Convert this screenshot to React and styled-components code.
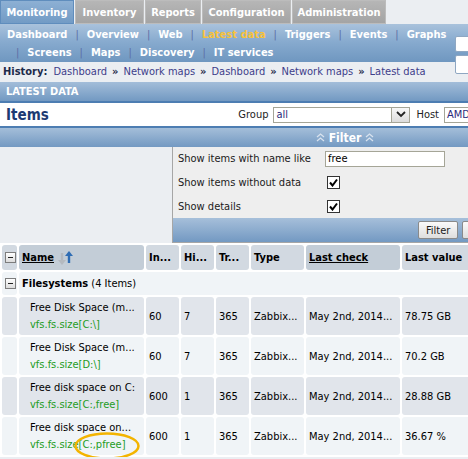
import React from "react";
import styled, { createGlobalStyle } from "styled-components";

const GlobalStyle = createGlobalStyle`
  html, body {
    margin: 0;
    padding: 0;
    overflow: hidden;
    background: #ebeef2;
  }
  body {
    font-family: "DejaVu Sans Condensed", "DejaVu Sans", sans-serif;
    font-size: 11px;
    color: #000;
  }
`;

const Page = styled.div`
  width: 690px;
  position: relative;
`;

/* top tabs */
const TabBar = styled.div`
  display: flex;
  gap: 1px;
  height: 24px;
`;

const Tab = styled.div`
  width: ${(p) => p.w}px;
  height: 22px;
  display: flex;
  align-items: center;
  justify-content: center;
  font-weight: bold;
  color: #fff;
  border: 1px solid ${(p) => (p.active ? "#5f8dbd" : "#bcbcbc")};
  background: ${(p) =>
    p.active
      ? "linear-gradient(#8db0d4, #729bc5)"
      : "linear-gradient(#b6b6b6, #a4a4a4)"};
`;

/* sub menu */
const SubMenu = styled.div`
  display: flex;
  height: 38px;
  background: linear-gradient(#a9c2dc, #88abcf 45%, #6f97c0);
`;

const MenuLinks = styled.div`
  flex: 1;
  padding: 1px 0 0 7px;
`;

const MenuRow = styled.div`
  display: flex;
  align-items: center;
  height: 18px;
  padding-left: ${(p) => p.indent || 0}px;
`;

const MenuLink = styled.span`
  font-weight: bold;
  color: ${(p) => (p.active ? "#f8c23a" : "#fff")};
`;

const MenuSep = styled.span`
  color: #5d6ea6;
  margin: 0 8px;
`;

const SearchCol = styled.div`
  width: 235px;
  height: 38px;
  display: flex;
  flex-direction: column;
  gap: 3px;
  padding-top: 12px;
  box-sizing: border-box;
`;

const SearchBox = styled.div`
  flex: none;
  height: ${(p) => p.h}px;
  background: #fff;
  border: 1px solid #8fa7c2;
  border-radius: 2px;
`;

/* history */
const History = styled.div`
  height: 19px;
  display: flex;
  align-items: center;
  padding-left: 3px;
  color: #3d3d8a;
`;

const HistoryLabel = styled.span`
  font-weight: bold;
  color: #1d2a4a;
  margin-right: 6px;
`;

const Raquo = styled.span`
  color: #1d2a4a;
  margin: 0 5px;
  font-weight: bold;
`;

/* section header */
const SectionHead = styled.div`
  margin-top: 1px;
  height: 19px;
  display: flex;
  align-items: center;
  padding-left: 6px;
  font-weight: bold;
  color: #fff;
  background: linear-gradient(#a3bdd9, #7299c2);
`;

const ItemsBar = styled.div`
  height: 23px;
  display: flex;
  align-items: center;
  background: #fff;
  border-top: 2px solid #4d7db2;
  border-bottom: 2px solid #4d7db2;
  padding-left: 6px;
`;

const ItemsTitle = styled.div`
  font-size: 15px;
  font-weight: bold;
  color: #1c3a72;
  flex: 1;
`;

const CtrlLabel = styled.span`
  color: #222;
  margin-right: 5px;
`;

const Select = styled.div`
  width: ${(p) => p.w}px;
  height: 14px;
  border: 1px solid #a5a597;
  display: flex;
  align-items: center;
  margin-right: 6px;
  background: #fff;
  color: #2a2a7a;
  padding-left: 2px;
`;

const SelectText = styled.span`
  flex: 1;
`;

const DropBtn = styled.span`
  width: 17px;
  height: 14px;
  border-left: 1px solid #a5a597;
  background: linear-gradient(#f8f8f8, #dcdcdc);
  display: flex;
  align-items: center;
  justify-content: center;
`;

/* filter toggle */
const FilterToggle = styled.div`
  height: 19px;
  display: flex;
  align-items: center;
  justify-content: center;
  gap: 4px;
  color: #fff;
  font-weight: bold;
  font-size: 12px;
  background: linear-gradient(#a4bed9, #7399c2);
`;

const FilterArea = styled.div`
  display: flex;
  height: 96px;
`;

const FilterSpacer = styled.div`
  width: 172px;
`;

const FilterBox = styled.div`
  width: 345px;
  border: 1px solid #a6a6a6;
  border-top: none;
  background: #eeeeee;
  display: flex;
  flex-direction: column;
`;

const FilterRow = styled.div`
  height: 24px;
  display: flex;
  align-items: center;
  padding-left: 5px;
`;

const FilterLabel = styled.span`
  width: 147px;
  flex: none;
  color: #1a1a1a;
  white-space: nowrap;
`;

const TextInput = styled.div`
  width: 116px;
  height: 14px;
  border: 1px solid #a5a597;
  background: #fff;
  padding-left: 2px;
  line-height: 14px;
`;

const Check = styled.span`
  width: 11px;
  height: 11px;
  border: 1px solid #333;
  background: #fff;
  margin-left: 2px;
  display: flex;
  align-items: center;
  justify-content: center;
`;

const FilterFoot = styled.div`
  margin-top: auto;
  height: 24px;
  display: flex;
  align-items: center;
  justify-content: flex-end;
  gap: 4px;
  padding-right: 12px;
  background: linear-gradient(#a6bfda, #7399c2);
`;

const Button = styled.div`
  height: 16px;
  padding: 0 7px;
  display: flex;
  align-items: center;
  border: 1px solid #8a8a8a;
  border-radius: 2px;
  background: linear-gradient(#fafafa, #dedede);
  color: #1a1a1a;
`;

/* table */
const Table = styled.table`
  border-collapse: separate;
  border-spacing: 2px;
  background: #fff;
  table-layout: fixed;
  width: 690px;
`;

const Th = styled.th`
  width: ${(p) => p.w}px;
  height: 25px;
  padding: 0 3px;
  text-align: left;
  font-weight: bold;
  white-space: nowrap;
  overflow: hidden;
  border-radius: 3px;
  background: ${(p) => (p.sorted ? "#c3cdd7" : "#d2d9e1")};
  text-decoration: ${(p) => (p.link ? "underline" : "none")};
`;

const Td = styled.td`
  height: ${(p) => p.h || 38}px;
  padding: 0 3px;
  padding-left: ${(p) => p.pl || 3}px;
  white-space: nowrap;
  overflow: hidden;
  border-radius: 3px;
  background: ${(p) => (p.dark ? "#e1e5eb" : "#f0f4f7")};
  line-height: 17px;
`;

const Key = styled.div`
  color: #239c23;
`;

const GroupName = styled.span`
  font-weight: bold;
`;

const MinusBox = styled.span`
  display: flex;
  width: 9px;
  height: 9px;
  border: 1px solid #7d7d7d;
  background: linear-gradient(#fff, #dcdcdc);
  align-items: center;
  justify-content: center;
  &::after {
    content: "";
    width: 5px;
    height: 1px;
    background: #222;
  }
`;

const Highlight = styled.svg`
  position: absolute;
  left: 73px;
  top: 431px;
`;

const Chevrons = () => (
  <svg width="9" height="9" viewBox="0 0 9 9">
    <path d="M1 4 L4.5 1 L8 4 M1 8 L4.5 5 L8 8" stroke="#d8e2ee" strokeWidth="1.3" fill="none" />
  </svg>
);

const SortArrows = () => (
  <svg width="18" height="16" viewBox="0 0 18 16" style={{ verticalAlign: "middle", marginLeft: 3 }}>
    <path d="M5 3 V11" stroke="#b4b9bf" strokeWidth="2.4" />
    <path d="M1 10 L5 15 L9 10 Z" fill="#b4b9bf" />
    <path d="M12 13 V5" stroke="#2f6db4" strokeWidth="2.4" />
    <path d="M8 6 L12 1 L16 6 Z" fill="#2f6db4" />
  </svg>
);

const CheckMark = () => (
  <svg width="9" height="9" viewBox="0 0 9 9">
    <path d="M1 4.5 L3.5 7.5 L8 1.5" stroke="#000" strokeWidth="2" fill="none" />
  </svg>
);

const rows = [
  { name: "Free Disk Space (m...", key: "vfs.fs.size[C:\\]", int: "60", hist: "7", value: "78.75 GB" },
  { name: "Free Disk Space (m...", key: "vfs.fs.size[D:\\]", int: "60", hist: "7", value: "70.2 GB" },
  { name: "Free disk space on C:", key: "vfs.fs.size[C:,free]", int: "600", hist: "1", value: "28.88 GB" },
  { name: "Free disk space on...", key: "vfs.fs.size[C:,pfree]", int: "600", hist: "1", value: "36.67 %" },
];

const menu1 = ["Dashboard", "Overview", "Web", "Latest data", "Triggers", "Events", "Graphs"];
const menu2 = ["Screens", "Maps", "Discovery", "IT services"];
const history = ["Dashboard", "Network maps", "Dashboard", "Network maps", "Latest data"];

export default function App() {
  return (
    <Page>
      <GlobalStyle />
      <TabBar>
        <Tab w={72} active>Monitoring</Tab>
        <Tab w={67}>Inventory</Tab>
        <Tab w={54}>Reports</Tab>
        <Tab w={87}>Configuration</Tab>
        <Tab w={92}>Administration</Tab>
      </TabBar>

      <SubMenu>
        <MenuLinks>
          <MenuRow>
            {menu1.map((m, i) => (
              <React.Fragment key={m}>
                {i > 0 && <MenuSep>|</MenuSep>}
                <MenuLink active={m === "Latest data"}>{m}</MenuLink>
              </React.Fragment>
            ))}
          </MenuRow>
          <MenuRow indent={1}>
            {menu2.map((m) => (
              <React.Fragment key={m}>
                <MenuSep>|</MenuSep>
                <MenuLink>{m}</MenuLink>
              </React.Fragment>
            ))}
          </MenuRow>
        </MenuLinks>
        <SearchCol>
          <SearchBox h={14} />
          <SearchBox h={17} />
        </SearchCol>
      </SubMenu>

      <History>
        <HistoryLabel>History:</HistoryLabel>
        {history.map((h, i) => (
          <React.Fragment key={i}>
            {i > 0 && <Raquo>»</Raquo>}
            <span>{h}</span>
          </React.Fragment>
        ))}
      </History>

      <SectionHead>LATEST DATA</SectionHead>
      <ItemsBar>
        <ItemsTitle>Items</ItemsTitle>
        <CtrlLabel>Group</CtrlLabel>
        <Select w={133}>
          <SelectText>all</SelectText>
          <DropBtn>
            <svg width="10" height="7" viewBox="0 0 10 7">
              <path d="M1 1 L5 5 L9 1" stroke="#222" strokeWidth="1.8" fill="none" />
            </svg>
          </DropBtn>
        </Select>
        <CtrlLabel>Host</CtrlLabel>
        <Select w={236}>
          <SelectText>AMD</SelectText>
        </Select>
      </ItemsBar>

      <FilterToggle>
        <Chevrons />
        <span>Filter</span>
        <Chevrons />
      </FilterToggle>

      <FilterArea>
        <FilterSpacer />
        <FilterBox>
          <FilterRow>
            <FilterLabel>Show items with name like</FilterLabel>
            <TextInput>free</TextInput>
          </FilterRow>
          <FilterRow>
            <FilterLabel>Show items without data</FilterLabel>
            <Check>
              <CheckMark />
            </Check>
          </FilterRow>
          <FilterRow>
            <FilterLabel>Show details</FilterLabel>
            <Check>
              <CheckMark />
            </Check>
          </FilterRow>
          <FilterFoot>
            <Button>Filter</Button>
            <Button>Reset</Button>
          </FilterFoot>
        </FilterBox>
      </FilterArea>

      <Table>
        <thead>
          <tr>
            <Th w={9}>
              <MinusBox />
            </Th>
            <Th w={119} sorted>
              <u>Name</u>
              <SortArrows />
            </Th>
            <Th w={27}>In...</Th>
            <Th w={27}>Hi...</Th>
            <Th w={27}>Tr...</Th>
            <Th w={47}>Type</Th>
            <Th w={88} sorted link>Last check</Th>
            <Th w={100}>Last value</Th>
            <Th w={172}>Change</Th>
          </tr>
        </thead>
        <tbody>
          <tr>
            <Td h={23}>
              <MinusBox />
            </Td>
            <Td h={23} colSpan={8}>
              <GroupName>Filesystems</GroupName> (4 Items)
            </Td>
          </tr>
          {rows.map((r, i) => (
            <tr key={i}>
              <Td dark={i % 2 === 0} />
              <Td dark={i % 2 === 0} pl={11}>
                <div>{r.name}</div>
                <Key>{r.key}</Key>
              </Td>
              <Td dark={i % 2 === 0}>{r.int}</Td>
              <Td dark={i % 2 === 0}>{r.hist}</Td>
              <Td dark={i % 2 === 0}>365</Td>
              <Td dark={i % 2 === 0}>Zabbix...</Td>
              <Td dark={i % 2 === 0}>May 2nd, 2014...</Td>
              <Td dark={i % 2 === 0}>{r.value}</Td>
              <Td dark={i % 2 === 0}></Td>
            </tr>
          ))}
        </tbody>
      </Table>

      <Highlight width="68" height="30" viewBox="0 0 68 30">
        <ellipse cx="34" cy="15" rx="31.5" ry="12.5" stroke="#f3b400" strokeWidth="2.5" fill="none" />
      </Highlight>
    </Page>
  );
}
